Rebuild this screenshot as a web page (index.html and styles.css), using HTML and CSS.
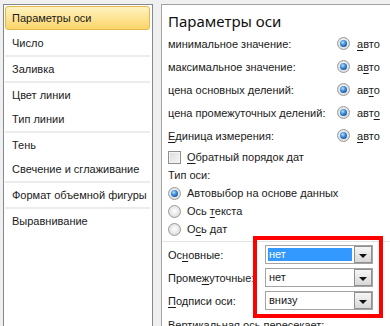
FILE: index.html
```html
<!DOCTYPE html>
<html lang="ru">
<head>
<meta charset="utf-8">
<title>Формат оси</title>
<link rel="stylesheet" href="styles.css">
</head>
<body>
<div class="dialog">
  <div class="nav">
    <div class="nav-item selected">Параметры оси</div>
    <div class="nav-item">Число</div>
    <div class="sep"></div>
    <div class="nav-item">Заливка</div>
    <div class="sep"></div>
    <div class="nav-item">Цвет линии</div>
    <div class="nav-item">Тип линии</div>
    <div class="sep"></div>
    <div class="nav-item">Тень</div>
    <div class="nav-item">Свечение и сглаживание</div>
    <div class="sep"></div>
    <div class="nav-item">Формат объемной фигуры</div>
    <div class="sep"></div>
    <div class="nav-item">Выравнивание</div>
  </div>
  <div class="panel">
    <div class="title">Параметры оси</div>
    <div class="opt-row">
      <span class="label">минимальное значение:</span>
      <span class="radio on"></span>
      <span class="val"><u>а</u>вто</span>
    </div>
    <div class="opt-row">
      <span class="label">максимальное значение:</span>
      <span class="radio on"></span>
      <span class="val">а<u>в</u>то</span>
    </div>
    <div class="opt-row">
      <span class="label">цена основных делений:</span>
      <span class="radio on"></span>
      <span class="val">ав<u>т</u>о</span>
    </div>
    <div class="opt-row">
      <span class="label">цена промежуточных делений:</span>
      <span class="radio on"></span>
      <span class="val">авт<u>о</u></span>
    </div>
    <div class="opt-row">
      <span class="label"><u>Е</u>диница измерения:</span>
      <span class="radio on"></span>
      <span class="val"><u>а</u>вто</span>
    </div>
    <div class="check-row">
      <span class="checkbox"></span>
      <span><u>О</u>братный порядок дат</span>
    </div>
    <div class="group-label">Тип оси:</div>
    <div class="radio-row">
      <span class="radio on"></span>
      <span>Автовыбор на основе данных</span>
    </div>
    <div class="radio-row">
      <span class="radio"></span>
      <span>Ось <u>т</u>екста</span>
    </div>
    <div class="radio-row">
      <span class="radio"></span>
      <span>О<u>с</u>ь дат</span>
    </div>
    <div class="divider"></div>
    <div class="select-group">
      <div class="select-row">
        <span class="select-label">Ос<u>н</u>овные:</span>
        <span class="select"><span class="select-value highlighted">нет</span><span class="drop"></span></span>
      </div>
      <div class="select-row">
        <span class="select-label">Проме<u>ж</u>уточные:</span>
        <span class="select"><span class="select-value">нет</span><span class="drop"></span></span>
      </div>
      <div class="select-row">
        <span class="select-label"><u>П</u>одписи оси:</span>
        <span class="select"><span class="select-value">внизу</span><span class="drop"></span></span>
      </div>
      <div class="annotation"></div>
    </div>
    <div class="group-label cut">Вертикальная ось пересекает:</div>
  </div>
</div>
</body>
</html>
```
FILE: styles.css
```css
html, body {
  margin: 0;
  padding: 0;
}
body {
  width: 390px;
  height: 326px;
  overflow: hidden;
  background: #f0f0f0;
  font-family: "Liberation Sans", Arial, sans-serif;
  font-size: 11px;
  color: #1a1a1a;
}
u {
  text-decoration: underline;
  text-underline-offset: 2px;
}
.dialog {
  display: flex;
  align-items: flex-start;
  padding: 4px 0 0 3px;
  height: 322px;
  overflow: hidden;
}
.nav {
  width: 148px;
  height: 330px;
  flex: none;
  background: #fff;
  border: 1px solid #828790;
  border-bottom: none;
}
.nav-item {
  height: 24px;
  line-height: 24px;
  padding-left: 8px;
  white-space: nowrap;
}
.nav-item.selected {
  height: 22px;
  line-height: 22px;
  margin: 1px 2px 1px 1px;
  padding-left: 6px;
  border: 1px solid #e5b84c;
  border-radius: 3px;
  background: linear-gradient(#fff3c0 0%, #fde59a 45%, #fcd568 100%);
}
.sep {
  height: 2px;
  margin: 0 2px 0 1px;
  background: #ececec;
}
.panel {
  flex: 1;
  margin-left: 8px;
  height: 330px;
  background: #fff;
  border-top: 1px solid #a3a3a3;
  border-left: 1px solid #a3a3a3;
  padding-left: 6px;
}
.title {
  padding-top: 6px;
  height: 21px;
  line-height: 21px;
  font-family: "Noto Sans", "Liberation Sans", sans-serif;
  font-size: 15px;
  color: #111;
}
.opt-row {
  display: grid;
  grid-template-columns: 162px 13px auto;
  column-gap: 7px;
  align-items: center;
  height: 23px;
}
.label {
  white-space: nowrap;
}
.radio {
  position: relative;
  width: 11px;
  height: 11px;
  border-radius: 50%;
  border: 1px solid #9a9a9a;
  background: radial-gradient(circle at 50% 45%, #ffffff 0%, #ebebeb 45%, #cfcfcf 100%);
  flex: none;
}
.radio.on::after {
  content: "";
  position: absolute;
  left: 2px;
  top: 2px;
  width: 7px;
  height: 7px;
  border-radius: 50%;
  background: radial-gradient(circle at 40% 35%, #b9e2ff 0%, #3f8fd8 40%, #134f9c 80%, #0d3c7a 100%);
}
.val {
  white-space: nowrap;
}
.check-row {
  display: flex;
  align-items: center;
  gap: 6px;
  height: 20px;
}
.checkbox {
  width: 11px;
  height: 11px;
  border: 1px solid #8e8f8f;
  background: linear-gradient(135deg, #dcdcdc, #f6f6f6);
  box-shadow: inset 0 0 0 1px #f4f4f4;
  flex: none;
}
.group-label {
  height: 17px;
  line-height: 17px;
  white-space: nowrap;
}
.radio-row {
  display: flex;
  align-items: center;
  gap: 6px;
  height: 18px;
}
.divider {
  height: 1px;
  margin: 3px 0 0 -6px;
  background: #e3e3e3;
}
.select-group {
  position: relative;
  padding-top: 3px;
}
.select-row {
  display: flex;
  align-items: center;
  height: 19px;
  margin-bottom: 4px;
}
.select-label {
  width: 97px;
  flex: none;
  white-space: nowrap;
}
.select {
  display: flex;
  width: 106px;
  height: 17px;
  border: 1px solid #a4a4a4;
  background: #fff;
  align-items: stretch;
}
.select-value {
  flex: 1;
  margin: 2px;
  line-height: 13px;
  padding-left: 1px;
}
.select-value.highlighted {
  background: #3399ff;
  color: #fff;
}
.drop {
  position: relative;
  width: 16px;
  border: 1px solid #8f8f8f;
  background: linear-gradient(#f6f6f6, #d8d8d8);
}
.drop::after {
  content: "";
  position: absolute;
  left: 4px;
  top: 7px;
  border-left: 4px solid transparent;
  border-right: 4px solid transparent;
  border-top: 4px solid #111;
}
.annotation {
  position: absolute;
  left: 85px;
  top: -6px;
  width: 122px;
  height: 74px;
  border: 4px solid #ff0000;
}
.cut {
  height: 22px;
  line-height: 22px;
}
```
